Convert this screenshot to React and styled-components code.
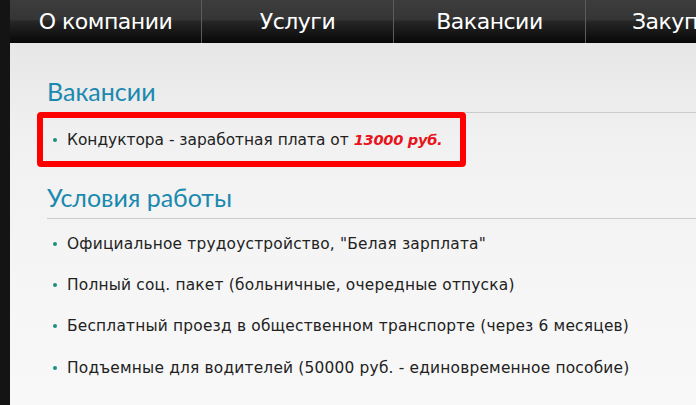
import React from 'react';
import styled, { createGlobalStyle } from 'styled-components';

const GlobalStyle = createGlobalStyle`
  html, body {
    margin: 0;
    padding: 0;
    background: #1b1b1b;
  }
  body {
    width: 696px;
    height: 405px;
    overflow: hidden;
  }
`;

const Page = styled.div`
  display: flex;
  height: 405px;
`;

const Strip = styled.div`
  width: 10px;
  flex-shrink: 0;
  background: #141414;
`;

const Main = styled.div`
  flex: 1;
  display: flex;
  flex-direction: column;
  min-width: 0;
  background: linear-gradient(#e2e2e2 0px, #f1f1f1 140px, #f6f6f6 300px, #f8f8f8);
`;

const Nav = styled.nav`
  display: flex;
  height: 43px;
  flex-shrink: 0;
  overflow: hidden;
  background: linear-gradient(#3d3d3d 0%, #353535 45%, #262626 50%, #070707 100%);
`;

const NavItem = styled.a`
  flex: 0 0 191px;
  display: flex;
  align-items: center;
  justify-content: center;
  border-right: 1px solid #5c5c5c;
  color: #fff;
  font-family: "DejaVu Sans", sans-serif;
  font-size: 22px;
  text-decoration: none;
  white-space: nowrap;
  letter-spacing: -0.5px;

  &:last-child {
    border-right: none;
    justify-content: flex-start;
    padding-left: 46px;
  }
`;

const Content = styled.div`
  padding: 33px 0 0 37px;
`;

const Heading = styled.h2`
  margin: 0;
  padding-bottom: 6px;
  border-bottom: 1px solid #cccccc;
  color: #1a89b0;
  font-family: Lato, "Open Sans", sans-serif;
  font-weight: 400;
  font-size: 25px;
  line-height: 30px;
`;

const List = styled.ul`
  margin: 0;
  padding: ${p => p.$top || 0}px 0 0;
  list-style: none;
`;

const Item = styled.li`
  display: flex;
  align-items: center;
  height: 41.3px;
  color: #222;
  font-family: "DejaVu Sans", sans-serif;
  font-size: 15.4px;
  letter-spacing: 0.2px;
  white-space: nowrap;

  &::before {
    content: "";
    width: 4px;
    height: 4px;
    border-radius: 50%;
    background: #1a8f80;
    margin: 0 10px 0 6px;
    flex-shrink: 0;
  }
`;

const Highlight = styled.div`
  display: inline-block;
  margin: -1px 0 0 -10px;
  padding: 0 18px 0 4px;
  border: 6px solid #ff0000;
  border-radius: 4px;

  ${Item} {
    height: 43px;
    letter-spacing: 0;
  }
`;

const Salary = styled.em`
  color: #e8151c;
  font-weight: 600;
  font-size: 14.6px;
  letter-spacing: -0.3px;
  margin-left: 5px;
`;

const Section = styled.section`
  margin-top: ${p => p.$gap || 0}px;
`;

const navLinks = ['О компании', 'Услуги', 'Вакансии', 'Закупки'];

const conditions = [
  'Официальное трудоустройство, "Белая зарплата"',
  'Полный соц. пакет (больничные, очередные отпуска)',
  'Бесплатный проезд в общественном транспорте (через 6 месяцев)',
  'Подъемные для водителей (50000 руб. - единовременное пособие)',
];

export default function App() {
  return (
    <>
      <GlobalStyle />
      <Page>
        <Strip />
        <Main>
          <Nav>
            {navLinks.map(l => (
              <NavItem key={l} href="#">{l}</NavItem>
            ))}
          </Nav>
          <Content>
            <Section>
              <Heading>Вакансии</Heading>
              <Highlight>
                <List>
                  <Item>
                    Кондуктора - заработная плата от<Salary>13000 руб.</Salary>
                  </Item>
                </List>
              </Highlight>
            </Section>
            <Section $gap={15}>
              <Heading>Условия работы</Heading>
              <List $top={4}>
                {conditions.map(c => (
                  <Item key={c}>{c}</Item>
                ))}
              </List>
            </Section>
          </Content>
        </Main>
      </Page>
    </>
  );
}
